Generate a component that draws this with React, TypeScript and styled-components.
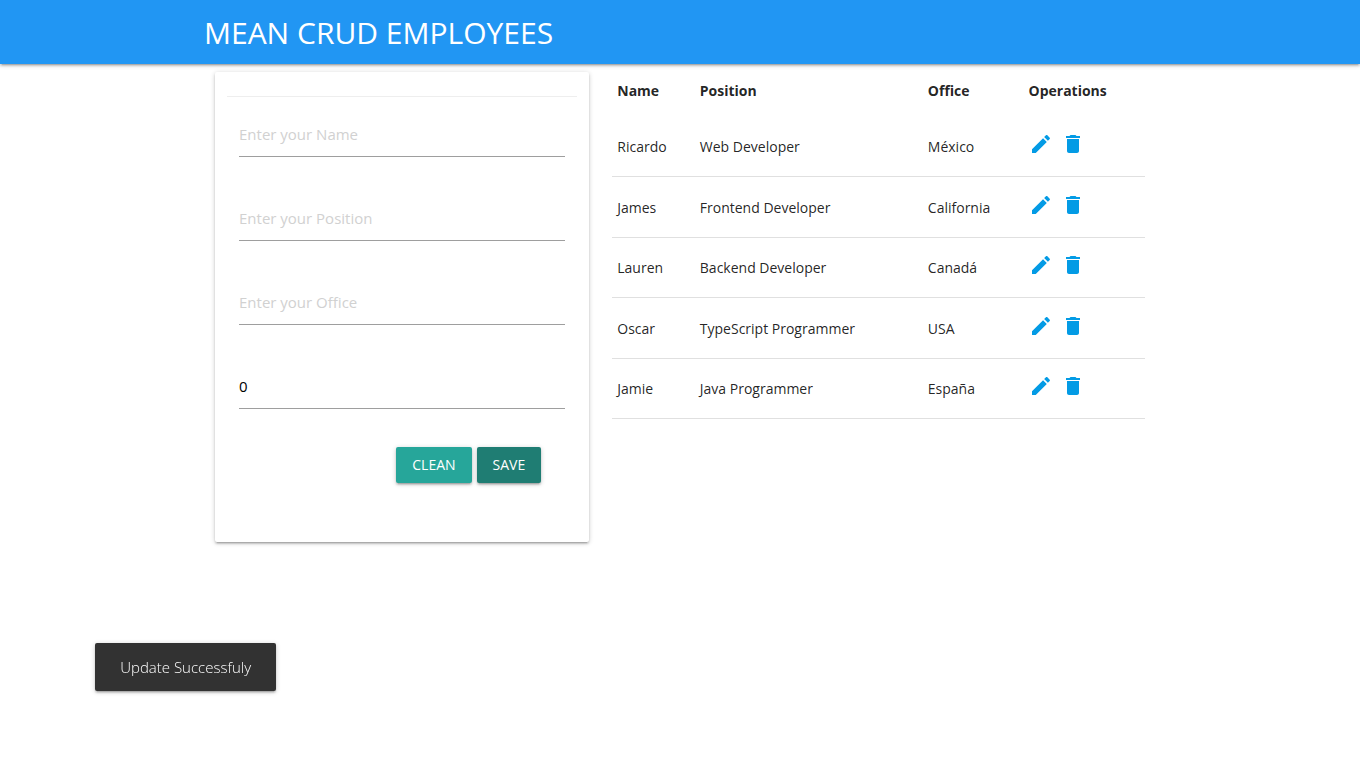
import React, { useState } from "react";
import styled, { createGlobalStyle } from "styled-components";

const GlobalStyle = createGlobalStyle`
  *, *::before, *::after { box-sizing: border-box; }
  body {
    margin: 0;
    background: #fff;
    color: rgba(0, 0, 0, 0.87);
    font-family: "Segoe UI", "Open Sans", "Noto Sans", sans-serif;
    font-size: 14px;
    line-height: 22px;
  }
`;

const raised =
  "0 2px 2px 0 rgba(0,0,0,0.14), 0 3px 1px -2px rgba(0,0,0,0.12), 0 1px 5px 0 rgba(0,0,0,0.2)";

const Container = styled.div`
  width: 70%;
  max-width: 1280px;
  margin: 0 auto;
`;

const NavBar = styled.nav`
  background: #2196f3;
  box-shadow: ${raised};
`;

const Brand = styled.a`
  display: inline-block;
  padding-top: 2px;
  color: #fff;
  font-size: 30px;
  line-height: 62px;
  white-space: nowrap;
  text-decoration: none;
  vertical-align: top;
`;

const Columns = styled.main`
  display: grid;
  grid-template-columns: 5fr 7fr;
  column-gap: 1px;
  align-items: start;
  padding-bottom: 20px;
`;

const Column = styled.section`
  min-width: 0;
  padding: 0 11px;
`;

const Card = styled.div`
  margin: 8px 0;
  padding: 24px 12px 59px;
  border-radius: 2px;
  background: #fff;
  box-shadow: ${raised};
`;

const Divider = styled.hr`
  height: 1px;
  margin: 0 0 14px;
  border: 0;
  background: #eee;
`;

const Form = styled.form`
  display: flex;
  flex-direction: column;
  gap: 38px;
  padding: 0 12px;
`;

const Field = styled.input`
  width: 100%;
  height: 46px;
  padding: 0;
  border: 0;
  border-bottom: 1px solid #9e9e9e;
  border-radius: 0;
  outline: none;
  background: transparent;
  color: #000;
  font-family: inherit;
  font-size: 15px;

  &::placeholder { color: #d1d1d1; opacity: 1; }
`;

const Actions = styled.div`
  display: flex;
  justify-content: flex-end;
  gap: 5px;
  padding-right: 24px;
`;

const Button = styled.button<{ $dark?: boolean }>`
  height: 36px;
  padding: 0 16px;
  border: 0;
  border-radius: 2px;
  background: ${(p) => (p.$dark ? "#1f7d73" : "#26a69a")};
  box-shadow: ${raised};
  color: #fff;
  font-family: inherit;
  font-size: 14px;
  font-weight: 500;
  line-height: 36px;
  text-transform: uppercase;
  cursor: pointer;
`;

const Table = styled.table`
  width: 100%;
  border-collapse: collapse;
  table-layout: fixed;
`;

const HeadCell = styled.th<{ $width?: string }>`
  width: ${(p) => p.$width ?? "auto"};
  height: 52px;
  padding: 2px 5px 0;
  text-align: left;
  font-weight: 700;
`;

const Row = styled.tr`
  height: 60px;
  border-bottom: 1px solid #e0e0e0;

  &:nth-child(even) { height: 61px; }
`;

const Cell = styled.td`
  padding: 2px 5px 0;
`;

const Operations = styled.div`
  display: flex;
  gap: 8px;
  padding-bottom: 6px;
`;

const IconButton = styled.button`
  display: flex;
  padding: 0;
  border: 0;
  background: none;
  color: #039be5;
  cursor: pointer;
`;

const Toast = styled.div`
  position: fixed;
  left: 7%;
  bottom: 10%;
  display: flex;
  align-items: center;
  min-height: 48px;
  padding: 0 25px;
  border-radius: 2px;
  background: #323232;
  box-shadow: ${raised};
  color: #fff;
  font-size: 15px;
  font-weight: 300;
`;

const Icon = ({ d }: { d: string }) => (
  <svg width="24" height="24" viewBox="0 0 24 24" fill="currentColor" aria-hidden="true">
    <path d={d} />
  </svg>
);

const EDIT =
  "M3 17.25V21h3.75L17.81 9.94l-3.75-3.75L3 17.25zM20.71 7.04c.39-.39.39-1.02 0-1.41l-2.34-2.34c-.39-.39-1.02-.39-1.41 0l-1.83 1.83 3.75 3.75 1.83-1.83z";
const DELETE = "M6 19c0 1.1.9 2 2 2h8c1.1 0 2-.9 2-2V7H6v12zM19 4h-3.5l-1-1h-5l-1 1H5v2h14V4z";

const employees = [
  { name: "Ricardo", position: "Web Developer", office: "México" },
  { name: "James", position: "Frontend Developer", office: "California" },
  { name: "Lauren", position: "Backend Developer", office: "Canadá" },
  { name: "Oscar", position: "TypeScript Programmer", office: "USA" },
  { name: "Jamie", position: "Java Programmer", office: "España" },
];

const empty = { name: "", position: "", office: "", salary: "0" };

export default function App() {
  const [form, setForm] = useState(empty);
  const bind = (key: keyof typeof empty) => ({
    value: form[key],
    onChange: (e: React.ChangeEvent<HTMLInputElement>) =>
      setForm({ ...form, [key]: e.target.value }),
  });

  return (
    <>
      <GlobalStyle />
      <NavBar>
        <Container>
          <Brand href="#">MEAN CRUD EMPLOYEES</Brand>
        </Container>
      </NavBar>
      <Container>
        <Columns>
          <Column>
            <Card>
              <Divider />
              <Form onSubmit={(e) => e.preventDefault()}>
                <Field aria-label="Name" placeholder="Enter your Name" {...bind("name")} />
                <Field aria-label="Position" placeholder="Enter your Position" {...bind("position")} />
                <Field aria-label="Office" placeholder="Enter your Office" {...bind("office")} />
                <Field aria-label="Salary" inputMode="numeric" {...bind("salary")} />
                <Actions>
                  <Button type="button" onClick={() => setForm(empty)}>Clean</Button>
                  <Button type="submit" $dark>Save</Button>
                </Actions>
              </Form>
            </Card>
          </Column>
          <Column>
            <Table>
              <thead>
                <tr>
                  <HeadCell $width="15.5%">Name</HeadCell>
                  <HeadCell $width="42.8%">Position</HeadCell>
                  <HeadCell $width="18.9%">Office</HeadCell>
                  <HeadCell>Operations</HeadCell>
                </tr>
              </thead>
              <tbody>
                {employees.map((e) => (
                  <Row key={e.name}>
                    <Cell>{e.name}</Cell>
                    <Cell>{e.position}</Cell>
                    <Cell>{e.office}</Cell>
                    <Cell>
                      <Operations>
                        <IconButton type="button" aria-label={`Edit ${e.name}`}>
                          <Icon d={EDIT} />
                        </IconButton>
                        <IconButton type="button" aria-label={`Delete ${e.name}`}>
                          <Icon d={DELETE} />
                        </IconButton>
                      </Operations>
                    </Cell>
                  </Row>
                ))}
              </tbody>
            </Table>
          </Column>
        </Columns>
      </Container>
      <Toast role="status">Update Successfuly</Toast>
    </>
  );
}
